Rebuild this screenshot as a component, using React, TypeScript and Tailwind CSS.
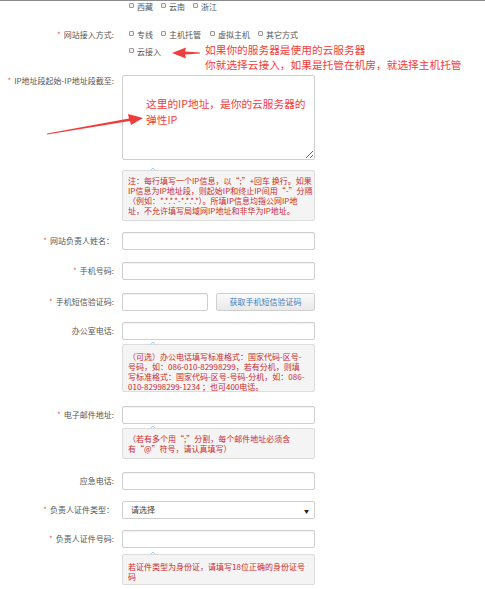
import React from "react";

const FONT = { fontFamily: '"Noto Sans CJK SC", "Noto Sans", sans-serif' };

function Cb({ text, last }: { text: string; last?: boolean }) {
  return (
    <div className={`flex items-center ${last ? "" : "mr-[8px]"}`}>
      <span className="w-[5px] h-[5px] border border-[#999] bg-[#f2f2f2] rounded-[1px] mr-[3px] -translate-y-[1px]" />
      <span className="text-[8px] leading-[10px] text-[#555] whitespace-nowrap">{text}</span>
    </div>
  );
}

function Label({ text, star, top }: { text: string; star?: boolean; top?: boolean }) {
  return (
    <div
      className={`w-[115px] shrink-0 flex justify-end ${top ? "items-start pt-[1px]" : "items-center"} text-[8px] leading-[10px] text-[#555] whitespace-nowrap pr-[1px]`}
    >
      {star && <span className="text-[#f06060] mr-[3px]">*</span>}
      <span>{text}</span>
    </div>
  );
}

function Input({ w = "w-[193px]" }: { w?: string }) {
  return (
    <input
      readOnly
      className={`${w} h-[18px] border border-[#cfcfcf] rounded-[2px] bg-white shadow-[inset_0_1px_1px_rgba(0,0,0,0.06)] outline-none`}
    />
  );
}

function Note({ lines, cls }: { lines: string[]; cls: string }) {
  return (
    <div className={`relative w-[193px] bg-[#f4f4f4] border border-[#dcdcdc] rounded-[2px] ${cls}`}>
      <svg className="absolute left-[27px] -top-[4px]" width="6" height="4" viewBox="0 0 6 4">
        <path d="M0.5 3.5 L3 1 L5.5 3.5" stroke="#9fd3ea" strokeWidth="1" fill="none" />
      </svg>
      {lines.map((l, i) => (
        <div key={i} className="text-[8px] leading-[10px] text-[#cc2a2a] whitespace-nowrap">
          {l}
        </div>
      ))}
    </div>
  );
}

export default function App() {
  return (
    <div className="relative w-[485px] h-[589px] bg-white overflow-hidden" style={FONT}>
      <div className="h-[1px] bg-[#8c8c8c]" />

      {/* province checkboxes */}
      <div className="flex">
        <div className="w-[129px] shrink-0" />
        <div className="flex items-center h-[11px]">
          <Cb text="西藏" />
          <Cb text="云南" />
          <Cb text="浙江" last />
        </div>
      </div>

      {/* 接入方式 */}
      <div className="flex mt-[14px]">
        <div className="w-[115px] shrink-0 flex flex-col">
          <div className="h-[17px] flex items-center justify-end text-[8px] leading-[10px] text-[#555] pr-[1px] whitespace-nowrap">
            <span className="text-[#f06060] mr-[3px]">*</span>网站接入方式:
          </div>
        </div>
        <div className="ml-[14px] flex flex-col">
          <div className="h-[17px] flex items-center">
            <Cb text="专线" />
            <Cb text="主机托管" />
            <div className="ml-[1px]" />
            <Cb text="虚拟主机" />
            <Cb text="其它方式" last />
          </div>
          <div className="h-[17px] flex items-center">
            <Cb text="云接入" last />
          </div>
        </div>
      </div>

      {/* IP textarea */}
      <div className="flex mt-[15px] gap-[7px]">
        <Label text="IP地址段起始-IP地址段截至:" star top />
        <textarea
          readOnly
          className="w-[193px] h-[85px] border border-[#cfcfcf] rounded-[2px] bg-white outline-none resize-y"
        />
      </div>

      <div className="flex mt-[10px] gap-[7px]">
        <div className="w-[115px] shrink-0" />
        <Note
          cls="h-[51px] pl-[5px] pt-[5px]"
          lines={[
            "注：每行填写一个IP信息，以“;”+回车 换行。如果",
            "IP信息为IP地址段，则起始IP和终止IP间用“-”分隔",
            "（例如：*.*.*.*-*.*.*.*）。所填IP信息均指公网IP地",
            "址，不允许填写局域网IP地址和非华为IP地址。",
          ]}
        />
      </div>

      <div className="flex mt-[11px] gap-[7px]">
        <Label text="网站负责人姓名：" star />
        <Input />
      </div>

      <div className="flex mt-[12px] gap-[7px]">
        <Label text="手机号码:" star />
        <Input />
      </div>

      <div className="flex mt-[13px] gap-[7px]">
        <Label text="手机短信验证码:" star />
        <Input w="w-[86px]" />
        <div className="ml-[1px] w-[99px] h-[18px] border border-[#cfcfcf] rounded-[2px] bg-gradient-to-b from-[#fafafa] to-[#e9e9e9] flex items-center justify-center text-[8px] leading-[10px] text-[#3a7fc0] whitespace-nowrap">
          获取手机短信验证码
        </div>
      </div>

      <div className="flex mt-[11px] gap-[7px]">
        <Label text="办公室电话:" />
        <Input />
      </div>

      <div className="flex mt-[4px] gap-[7px]">
        <div className="w-[115px] shrink-0" />
        <Note
          cls="h-[48px] pl-[5px] pt-[7px]"
          lines={[
            "（可选）办公电话填写标准格式：国家代码-区号-",
            "号码，如：086-010-82998299，若有分机，则填",
            "写标准格式：国家代码-区号-号码-分机，如：086-",
            "010-82998299-1234 ；也可400电话。",
          ]}
        />
      </div>

      <div className="flex mt-[14px] gap-[7px]">
        <Label text="电子邮件地址:" star />
        <Input />
      </div>

      <div className="flex mt-[4px] gap-[7px]">
        <div className="w-[115px] shrink-0" />
        <Note
          cls="h-[31px] pl-[5px] pt-[5px]"
          lines={["（若有多个用“;”分割，每个邮件地址必须含", "有“@”符号，请认真填写）"]}
        />
      </div>

      <div className="flex mt-[13px] gap-[7px]">
        <Label text="应急电话:" />
        <Input />
      </div>

      <div className="flex mt-[11px] gap-[7px]">
        <Label text="负责人证件类型：" star />
        <div className="w-[193px] h-[18px] border border-[#cfcfcf] rounded-[2px] bg-white flex items-center justify-between pl-[8px] pr-[5px] text-[8px] leading-[10px] text-[#444]">
          <span>请选择</span>
          <span className="text-[5px] leading-[5px] text-[#222]">▼</span>
        </div>
      </div>

      <div className="flex mt-[11px] gap-[7px]">
        <Label text="负责人证件号码:" star />
        <Input />
      </div>

      <div className="flex mt-[6px] gap-[7px]">
        <div className="w-[115px] shrink-0" />
        <Note
          cls="h-[31px] pl-[5px] pt-[7px]"
          lines={["若证件类型为身份证，请填写18位正确的身份证号", "码"]}
        />
      </div>

      {/* annotations */}
      <div className="absolute left-[205px] top-[42px] text-[10.7px] leading-[15px] text-[#f53b3b] whitespace-nowrap">
        <div>如果你的服务器是使用的云服务器</div>
        <div>你就选择云接入，如果是托管在机房，就选择主机托管</div>
      </div>
      <div className="absolute left-[146px] top-[96px] text-[10.7px] leading-[16px] text-[#f53b3b] whitespace-nowrap">
        <div>这里的IP地址，是你的云服务器的</div>
        <div>弹性IP</div>
      </div>
      <svg className="absolute left-0 top-0 pointer-events-none" width="485" height="589" viewBox="0 0 485 589">
        <path d="M172 53 L186 47.5 L185 51.5 L200 52.5 L200 53.5 L185 54.5 L186 58.5 Z" fill="#f03c3c" />
        <path d="M47 133.5 L129 118.5 L128 114 L143 118 L131 125 L130 121 L47 134.5 Z" fill="#f03c3c" />
      </svg>
    </div>
  );
}
